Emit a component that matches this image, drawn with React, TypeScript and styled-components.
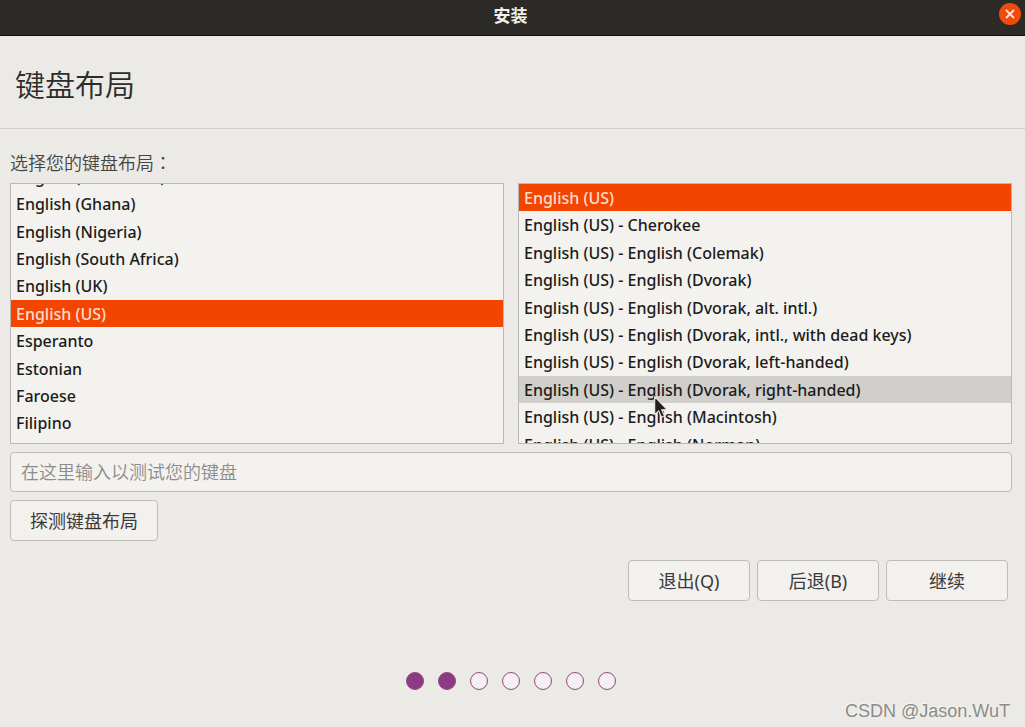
import { useLayoutEffect, useRef, useState } from "react";
import styled, { createGlobalStyle, css } from "styled-components";

const GlobalStyle = createGlobalStyle`
  * { box-sizing: border-box; }
  body {
    margin: 0;
    background: #ebeae6;
    color: #1c1c1c;
    font-family: "Noto Sans", "Noto Sans CJK SC", sans-serif;
    font-size: 16px;
  }
  button, input { font: inherit; color: inherit; }
`;

const Window = styled.main`
  position: relative;
  display: flex;
  flex-direction: column;
  min-height: 100vh;
`;

const TitleBar = styled.header`
  display: grid;
  grid-template-columns: 1fr auto 1fr;
  align-items: center;
  height: 36px;
  padding: 0 4px 7px 0;
  background: #2c2a26;
  border-bottom: 1px solid #11100e;
  color: #f0efeb;
`;

const WindowTitle = styled.span`
  grid-column: 2;
  font-family: "Noto Sans CJK SC", sans-serif;
  font-size: 17px;
  font-weight: 700;
  line-height: 24px;
  padding-top: 2px;
`;

const CloseButton = styled.button`
  justify-self: end;
  display: flex;
  width: 22px;
  height: 22px;
  padding: 0;
  border: 0;
  border-radius: 50%;
  background: #f04a0c;
  color: #fde6da;
`;

const Heading = styled.h1`
  margin: 0;
  padding: 25px 15px 23px;
  border-bottom: 1px solid #d0cfcb;
  font-family: "Noto Sans CJK SC", sans-serif;
  font-size: 30px;
  font-weight: 350;
  line-height: 44px;
  color: #2c2c2c;
`;

const Content = styled.form`
  display: flex;
  flex-direction: column;
  gap: 8px;
  padding: 21px 13px 0 10px;
`;

const Caption = styled.h2`
  margin: 0;
  padding-bottom: 1px;
  font-family: "Noto Sans CJK SC", sans-serif;
  font-size: 18px;
  font-weight: 350;
  line-height: 24px;
  color: #454545;
`;

const Colon = styled.span`
  font-family: "Noto Sans CJK TC", sans-serif;
`;

const Lists = styled.div`
  display: grid;
  grid-template-columns: 1fr 1fr;
  gap: 14px;
`;

const ListBox = styled.div`
  height: 261px;
  overflow: hidden;
  background: #f3f2ef;
  border: 1px solid #bab9b5;
`;

const Options = styled.ul<{ $height: number }>`
  display: flex;
  flex-direction: column;
  height: ${(p) => p.$height}px;
  margin: 0;
  padding: 0;
  list-style: none;
`;

const Option = styled.li<{ $selected: boolean; $hovered: boolean }>`
  flex: 1 1 0;
  min-height: 0;
  padding-left: 5px;
  font-weight: 500;
  line-height: 28px;
  white-space: nowrap;
  cursor: default;
  ${(p) => p.$hovered && css`background: #d0cfcb;`}
  ${(p) => p.$selected && css`background: #f24600; color: #fbdccb;`}
`;

const TestInput = styled.input`
  width: 100%;
  height: 40px;
  padding: 0 10px 2px;
  border: 1px solid #bebdb9;
  border-radius: 4px;
  background: #f3f2ef;
  font-family: "Noto Sans CJK SC", sans-serif;
  font-size: 18px;
  &::placeholder { color: #8d8c89; opacity: 1; font-weight: 350; }
`;

const Button = styled.button`
  min-width: 122px;
  height: 41px;
  padding: 0 19px 2px;
  border: 1px solid #bebdb9;
  border-radius: 4px;
  background: #f3f1ee;
  color: #3a3a3a;
  font-family: "Noto Sans", "Noto Sans CJK SC", sans-serif;
  font-size: 18px;
`;

const Detect = styled.div`
  display: flex;
`;

const Actions = styled.div`
  display: flex;
  justify-content: flex-end;
  gap: 7px;
  padding: 11px 4px 0 0;
`;

const Steps = styled.ol`
  display: flex;
  justify-content: center;
  gap: 14px;
  margin: 0;
  padding: 71px 3px 0 0;
  list-style: none;
`;

const Step = styled.li<{ $done: boolean }>`
  width: 18px;
  height: 18px;
  border: 1px solid #8d4a86;
  border-radius: 50%;
  background: ${(p) => (p.$done ? "#8b3a85" : "#f4eff1")};
`;

const Watermark = styled.span`
  position: absolute;
  right: 15px;
  bottom: 4px;
  font-family: "Liberation Sans", sans-serif;
  font-size: 18px;
  line-height: 24px;
  color: #8c8b89;
  text-shadow: -1px -1px 0 #f6f5f2;
`;

const Pointer = styled.svg`
  position: absolute;
  left: 653px;
  top: 395px;
  width: 18px;
  height: 27px;
  pointer-events: none;
`;

const languages = [
  "English (Cameroon)",
  "English (Ghana)",
  "English (Nigeria)",
  "English (South Africa)",
  "English (UK)",
  "English (US)",
  "Esperanto",
  "Estonian",
  "Faroese",
  "Filipino",
  "Finnish",
];

const variants = [
  "English (US)",
  "English (US) - Cherokee",
  "English (US) - English (Colemak)",
  "English (US) - English (Dvorak)",
  "English (US) - English (Dvorak, alt. intl.)",
  "English (US) - English (Dvorak, intl., with dead keys)",
  "English (US) - English (Dvorak, left-handed)",
  "English (US) - English (Dvorak, right-handed)",
  "English (US) - English (Macintosh)",
  "English (US) - English (Norman)",
];

interface PickerProps {
  label: string;
  items: string[];
  height: number;
  hovered?: string;
}

function Picker({ label, items, height, hovered }: PickerProps) {
  const box = useRef<HTMLDivElement>(null);
  const [selected, setSelected] = useState("English (US)");

  // Open the list with the selected entry in the middle.
  useLayoutEffect(() => {
    const el = box.current;
    if (!el) return;
    const row = height / items.length;
    el.scrollTop = (items.indexOf("English (US)") + 1 / 2) * row - el.clientHeight / 2;
  }, [height, items]);

  return (
    <ListBox ref={box}>
      <Options role="listbox" aria-label={label} tabIndex={0} $height={height}>
        {items.map((item) => (
          <Option
            key={item}
            role="option"
            aria-selected={item === selected}
            $selected={item === selected}
            $hovered={item === hovered}
            onClick={() => setSelected(item)}
          >
            {item}
          </Option>
        ))}
      </Options>
    </ListBox>
  );
}

export default function App() {
  return (
    <>
      <GlobalStyle />
      <Window>
        <TitleBar>
          <WindowTitle>安装</WindowTitle>
          <CloseButton type="button" aria-label="关闭">
            <svg viewBox="0 0 22 22" width="22" height="22" aria-hidden="true">
              <path d="M7 7l8 8M15 7l-8 8" stroke="currentColor" strokeWidth="1.8" />
            </svg>
          </CloseButton>
        </TitleBar>
        <Heading>键盘布局</Heading>
        <Content onSubmit={(e) => e.preventDefault()}>
          <Caption>
            选择您的键盘布局<Colon lang="zh-TW">：</Colon>
          </Caption>
          <Lists>
            <Picker label="键盘布局" items={languages} height={301} />
            <Picker
              label="布局变体"
              items={variants}
              height={274}
              hovered="English (US) - English (Dvorak, right-handed)"
            />
          </Lists>
          <TestInput
            type="text"
            aria-label="在这里输入以测试您的键盘"
            placeholder="在这里输入以测试您的键盘"
          />
          <Detect>
            <Button type="button">探测键盘布局</Button>
          </Detect>
          <Actions>
            <Button type="button">退出(Q)</Button>
            <Button type="button">后退(B)</Button>
            <Button type="submit">继续</Button>
          </Actions>
        </Content>
        <Steps aria-label="安装进度">
          {[0, 1, 2, 3, 4, 5, 6].map((n) => (
            <Step key={n} $done={n < 2} />
          ))}
        </Steps>
        <Watermark>CSDN @Jason.WuT</Watermark>
        <Pointer viewBox="0 0 16 24" aria-hidden="true">
          <path
            d="M1.5 1.5v16l3.6-3.4 2.5 5.6 2.6-1.2-2.5-5.4h5z"
            fill="#202020"
            stroke="#e9e8e5"
            strokeWidth="1"
            strokeLinejoin="round"
          />
        </Pointer>
      </Window>
    </>
  );
}
